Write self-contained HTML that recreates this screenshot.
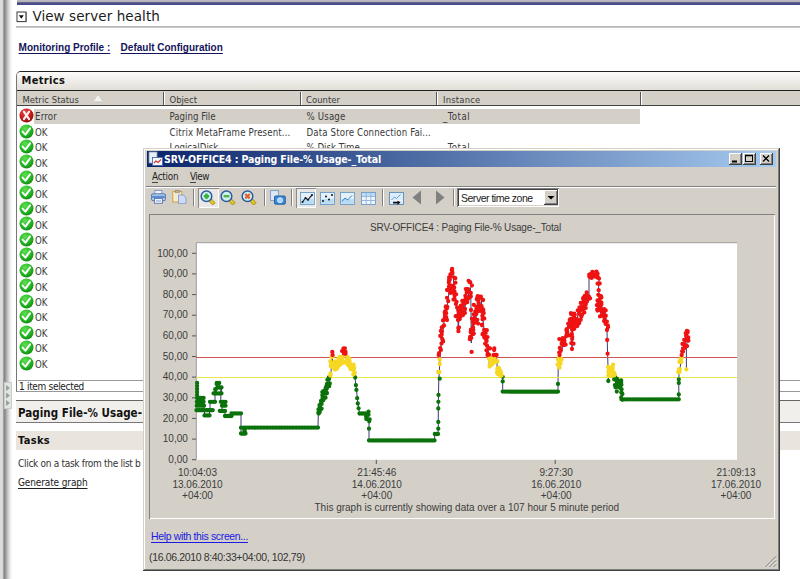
<!DOCTYPE html>
<html><head><meta charset="utf-8"><title>View server health</title>
<style>
*{box-sizing:border-box;margin:0;padding:0}
html,body{width:800px;height:579px;overflow:hidden;background:#fff}
body{position:relative;font-family:"DejaVu Sans Condensed","Liberation Sans",sans-serif;font-size:10px;color:#222}
.a{position:absolute}
.t{position:absolute;white-space:pre}
#lstrip{left:0;top:0;width:16px;height:579px;background:linear-gradient(90deg,#dedede 0,#d8d8d8 3px,#7e7e7e 3.8px,#909090 5px,#b8b8b8 7px,#dcdcdc 9px,#f6f6f6 11px,#fff 12.5px)}
#win{left:143px;top:148px;width:637px;height:423px;background:#d4d0c8;box-shadow:inset -1px -1px 0 #404040,inset 1px 1px 0 #d4d0c8,inset -2px -2px 0 #808080,inset 2px 2px 0 #fff}
.btn{position:absolute;top:5px;width:13px;height:12px;background:#d4d0c8;box-shadow:inset -1px -1px 0 #404040,inset 1px 1px 0 #fff,inset -2px -2px 0 #808080}
.sep{position:absolute;top:41px;width:2px;height:17px;border-left:1px solid #808080;border-right:1px solid #fff}
</style></head><body>
<div class="a" id="lstrip"></div>
<div class="a" style="left:16.5px;top:0;width:784px;height:5px;background:linear-gradient(#bcbcc0 0,#b0b0b6 2.2px,#4a4c88 2.6px,#4a4c88 4.6px,#fff 5px)"></div>
<div class="a" style="left:16px;top:26px;width:784px;height:2px;background:linear-gradient(#b0b0b0,#d0d0d0)"></div>
<svg class="a" style="left:16px;top:10.500px" width="12" height="12" viewBox="0 0 12 12"><rect x="1" y="1" width="9" height="9.500" fill="#fff" stroke="#3a3a3a" stroke-width="1"/><path d="M1 10.700h9.200V1" stroke="#555" stroke-width=".8" fill="none"/><path d="M2.800 4.200h5l-2.500 3.500z" fill="#111"/></svg>
<div class="t" style='left:32.40px;top:6.80px;font:13.5px "DejaVu Sans","Liberation Sans",sans-serif;line-height:19px;color:#1c1c1c;letter-spacing:0.078px;'>View server health</div>
<div class="t" style='left:18.60px;top:41.20px;font:bold 10px "Liberation Sans",sans-serif;line-height:14px;color:#14145a;text-decoration:underline;text-decoration-thickness:1px;text-underline-offset:1.5px;'>Monitoring Profile :</div>
<div class="t" style='left:120.60px;top:41.20px;font:bold 10px "Liberation Sans",sans-serif;line-height:14px;color:#14145a;text-decoration:underline;text-decoration-thickness:1px;text-underline-offset:1.5px;'>Default Configuration</div>
<div class="a" style="left:16px;top:71px;width:790px;height:321px;border:1px solid #777;border-top-color:#222;border-bottom-color:#999;border-radius:5px 0 0 0;background:#fff;overflow:hidden">
<div class="a" style="left:0;top:0;width:790px;height:18px;background:linear-gradient(#fcfbfa,#e2dfd8)"></div>
<div class="a" style="left:0;top:18px;width:790px;height:1px;background:#222"></div>
<div class="a" style="left:0;top:19px;width:790px;height:15px;background:#d4d0c8;border-bottom:1px solid #444"></div>
<div class="a" style="left:146px;top:20px;width:2px;height:13px;border-left:1px solid #555;border-right:1px solid #fff"></div>
<div class="a" style="left:283px;top:20px;width:2px;height:13px;border-left:1px solid #555;border-right:1px solid #fff"></div>
<div class="a" style="left:419px;top:20px;width:2px;height:13px;border-left:1px solid #555;border-right:1px solid #fff"></div>
<div class="a" style="left:623px;top:20px;width:2px;height:13px;border-left:1px solid #555;border-right:1px solid #fff"></div>
<div class="a" style="left:17px;top:36.500px;width:606px;height:15px;background:#d4d0c8"></div>
</div>
<div class="t" style='left:21.60px;top:73.40px;font:bold 11px "DejaVu Sans Condensed","Liberation Sans",sans-serif;line-height:15px;color:#111;letter-spacing:0.325px;'>Metrics</div>
<div class="t" style='left:22.40px;top:92.80px;font:9.4px "DejaVu Sans Condensed","Liberation Sans",sans-serif;line-height:13px;color:#3a3a3a;letter-spacing:0.063px;'>Metric Status</div>
<svg class="a" style="left:93px;top:95px" width="10" height="8" viewBox="0 0 10 8"><path d="M1.5 6.5l3.5-5.5 3.5 5.5z" fill="#f4f2ee" stroke="#fff" stroke-width=".8"/><path d="M1.5 6.8h7.2" stroke="#aaa" stroke-width=".6"/></svg>
<div class="t" style='left:169.50px;top:92.80px;font:9.4px "DejaVu Sans Condensed","Liberation Sans",sans-serif;line-height:13px;color:#3a3a3a;'>Object</div>
<div class="t" style='left:306.00px;top:92.80px;font:9.4px "DejaVu Sans Condensed","Liberation Sans",sans-serif;line-height:13px;color:#3a3a3a;letter-spacing:0.040px;'>Counter</div>
<div class="t" style='left:443.00px;top:92.80px;font:9.4px "DejaVu Sans Condensed","Liberation Sans",sans-serif;line-height:13px;color:#3a3a3a;letter-spacing:0.203px;'>Instance</div>
<svg class="a" width="0" height="0"><defs><radialGradient id="gg" cx=".4" cy=".3" r=".8"><stop offset="0" stop-color="#5ee04e"/><stop offset=".6" stop-color="#22b422"/><stop offset="1" stop-color="#0c7c10"/></radialGradient></defs></svg>
<svg class="a" style="left:18.5px;top:107.5px" width="15" height="15" viewBox="0 0 15 15"><defs><radialGradient id="gr" cx=".4" cy=".3" r=".8"><stop offset="0" stop-color="#e84848"/><stop offset=".55" stop-color="#c81818"/><stop offset="1" stop-color="#7c0a0a"/></radialGradient></defs><circle cx="7.5" cy="7.5" r="7" fill="url(#gr)"/><path d="M4.900 3.700l5.200 7.400M10.100 3.700l-5.200 7.400" stroke="#fdf0f0" stroke-width="2.200" stroke-linecap="round"/></svg>
<div class="t" style='left:35.00px;top:110.10px;font:9.6px "DejaVu Sans Condensed","Liberation Sans",sans-serif;line-height:13px;color:#3a3a3a;letter-spacing:0.180px;'>Error</div>
<div class="t" style='left:169.50px;top:110.10px;font:9.6px "DejaVu Sans Condensed","Liberation Sans",sans-serif;line-height:13px;color:#3a3a3a;'>Paging File</div>
<div class="t" style='left:306.50px;top:110.10px;font:9.6px "DejaVu Sans Condensed","Liberation Sans",sans-serif;line-height:13px;color:#3a3a3a;letter-spacing:0.165px;'>% Usage</div>
<div class="t" style='left:443.00px;top:110.10px;font:9.6px "DejaVu Sans Condensed","Liberation Sans",sans-serif;line-height:13px;color:#3a3a3a;letter-spacing:0.448px;'>_Total</div>
<svg class="a" style="left:18.5px;top:123.5px" width="15" height="15" viewBox="0 0 15 15"><circle cx="7.5" cy="7.5" r="7" fill="url(#gg)"/><path d="M3.6 7.6l2.8 3 4.6-6.2" stroke="#fff" stroke-width="2" fill="none" stroke-linecap="round" stroke-linejoin="round"/></svg>
<div class="t" style='left:35.00px;top:125.80px;font:9.6px "DejaVu Sans Condensed","Liberation Sans",sans-serif;line-height:13px;color:#3a3a3a;letter-spacing:0.023px;'>OK</div>
<div class="t" style='left:169.50px;top:125.80px;font:9.6px "DejaVu Sans Condensed","Liberation Sans",sans-serif;line-height:13px;color:#3a3a3a;letter-spacing:0.142px;'>Citrix MetaFrame Present...</div>
<div class="t" style='left:306.50px;top:125.80px;font:9.6px "DejaVu Sans Condensed","Liberation Sans",sans-serif;line-height:13px;color:#3a3a3a;letter-spacing:0.145px;'>Data Store Connection Fai...</div>
<svg class="a" style="left:18.5px;top:139.0px" width="15" height="15" viewBox="0 0 15 15"><circle cx="7.5" cy="7.5" r="7" fill="url(#gg)"/><path d="M3.6 7.6l2.8 3 4.6-6.2" stroke="#fff" stroke-width="2" fill="none" stroke-linecap="round" stroke-linejoin="round"/></svg>
<div class="t" style='left:35.00px;top:141.27px;font:9.6px "DejaVu Sans Condensed","Liberation Sans",sans-serif;line-height:13px;color:#3a3a3a;letter-spacing:0.023px;'>OK</div>
<div class="t" style='left:169.50px;top:141.27px;font:9.6px "DejaVu Sans Condensed","Liberation Sans",sans-serif;line-height:13px;color:#3a3a3a;'>LogicalDisk</div>
<div class="t" style='left:306.50px;top:141.27px;font:9.6px "DejaVu Sans Condensed","Liberation Sans",sans-serif;line-height:13px;color:#3a3a3a;'>% Disk Time</div>
<div class="t" style='left:443.00px;top:141.27px;font:9.6px "DejaVu Sans Condensed","Liberation Sans",sans-serif;line-height:13px;color:#3a3a3a;letter-spacing:0.448px;'>_Total</div>
<svg class="a" style="left:18.5px;top:154.4px" width="15" height="15" viewBox="0 0 15 15"><circle cx="7.5" cy="7.5" r="7" fill="url(#gg)"/><path d="M3.6 7.6l2.8 3 4.6-6.2" stroke="#fff" stroke-width="2" fill="none" stroke-linecap="round" stroke-linejoin="round"/></svg>
<div class="t" style='left:35.00px;top:156.74px;font:9.6px "DejaVu Sans Condensed","Liberation Sans",sans-serif;line-height:13px;color:#3a3a3a;letter-spacing:0.023px;'>OK</div>
<div class="t" style='left:169.50px;top:156.74px;font:9.6px "DejaVu Sans Condensed","Liberation Sans",sans-serif;line-height:13px;color:#3a3a3a;'>LogicalDisk</div>
<div class="t" style='left:306.50px;top:156.74px;font:9.6px "DejaVu Sans Condensed","Liberation Sans",sans-serif;line-height:13px;color:#3a3a3a;'>% Free Space</div>
<div class="t" style='left:443.00px;top:156.74px;font:9.6px "DejaVu Sans Condensed","Liberation Sans",sans-serif;line-height:13px;color:#3a3a3a;letter-spacing:0.448px;'>_Total</div>
<svg class="a" style="left:18.5px;top:169.9px" width="15" height="15" viewBox="0 0 15 15"><circle cx="7.5" cy="7.5" r="7" fill="url(#gg)"/><path d="M3.6 7.6l2.8 3 4.6-6.2" stroke="#fff" stroke-width="2" fill="none" stroke-linecap="round" stroke-linejoin="round"/></svg>
<div class="t" style='left:35.00px;top:172.21px;font:9.6px "DejaVu Sans Condensed","Liberation Sans",sans-serif;line-height:13px;color:#3a3a3a;letter-spacing:0.023px;'>OK</div>
<div class="t" style='left:169.50px;top:172.21px;font:9.6px "DejaVu Sans Condensed","Liberation Sans",sans-serif;line-height:13px;color:#3a3a3a;'>Memory</div>
<div class="t" style='left:306.50px;top:172.21px;font:9.6px "DejaVu Sans Condensed","Liberation Sans",sans-serif;line-height:13px;color:#3a3a3a;'>Available Bytes</div>
<svg class="a" style="left:18.5px;top:185.4px" width="15" height="15" viewBox="0 0 15 15"><circle cx="7.5" cy="7.5" r="7" fill="url(#gg)"/><path d="M3.6 7.6l2.8 3 4.6-6.2" stroke="#fff" stroke-width="2" fill="none" stroke-linecap="round" stroke-linejoin="round"/></svg>
<div class="t" style='left:35.00px;top:187.68px;font:9.6px "DejaVu Sans Condensed","Liberation Sans",sans-serif;line-height:13px;color:#3a3a3a;letter-spacing:0.023px;'>OK</div>
<div class="t" style='left:169.50px;top:187.68px;font:9.6px "DejaVu Sans Condensed","Liberation Sans",sans-serif;line-height:13px;color:#3a3a3a;'>Memory</div>
<div class="t" style='left:306.50px;top:187.68px;font:9.6px "DejaVu Sans Condensed","Liberation Sans",sans-serif;line-height:13px;color:#3a3a3a;'>Pages/sec</div>
<svg class="a" style="left:18.5px;top:200.9px" width="15" height="15" viewBox="0 0 15 15"><circle cx="7.5" cy="7.5" r="7" fill="url(#gg)"/><path d="M3.6 7.6l2.8 3 4.6-6.2" stroke="#fff" stroke-width="2" fill="none" stroke-linecap="round" stroke-linejoin="round"/></svg>
<div class="t" style='left:35.00px;top:203.15px;font:9.6px "DejaVu Sans Condensed","Liberation Sans",sans-serif;line-height:13px;color:#3a3a3a;letter-spacing:0.023px;'>OK</div>
<div class="t" style='left:169.50px;top:203.15px;font:9.6px "DejaVu Sans Condensed","Liberation Sans",sans-serif;line-height:13px;color:#3a3a3a;'>Network Interface</div>
<div class="t" style='left:306.50px;top:203.15px;font:9.6px "DejaVu Sans Condensed","Liberation Sans",sans-serif;line-height:13px;color:#3a3a3a;'>Bytes Total/sec</div>
<svg class="a" style="left:18.5px;top:216.3px" width="15" height="15" viewBox="0 0 15 15"><circle cx="7.5" cy="7.5" r="7" fill="url(#gg)"/><path d="M3.6 7.6l2.8 3 4.6-6.2" stroke="#fff" stroke-width="2" fill="none" stroke-linecap="round" stroke-linejoin="round"/></svg>
<div class="t" style='left:35.00px;top:218.62px;font:9.6px "DejaVu Sans Condensed","Liberation Sans",sans-serif;line-height:13px;color:#3a3a3a;letter-spacing:0.023px;'>OK</div>
<div class="t" style='left:169.50px;top:218.62px;font:9.6px "DejaVu Sans Condensed","Liberation Sans",sans-serif;line-height:13px;color:#3a3a3a;'>Processor</div>
<div class="t" style='left:306.50px;top:218.62px;font:9.6px "DejaVu Sans Condensed","Liberation Sans",sans-serif;line-height:13px;color:#3a3a3a;'>% Interrupt Time</div>
<div class="t" style='left:443.00px;top:218.62px;font:9.6px "DejaVu Sans Condensed","Liberation Sans",sans-serif;line-height:13px;color:#3a3a3a;letter-spacing:0.448px;'>_Total</div>
<svg class="a" style="left:18.5px;top:231.8px" width="15" height="15" viewBox="0 0 15 15"><circle cx="7.5" cy="7.5" r="7" fill="url(#gg)"/><path d="M3.6 7.6l2.8 3 4.6-6.2" stroke="#fff" stroke-width="2" fill="none" stroke-linecap="round" stroke-linejoin="round"/></svg>
<div class="t" style='left:35.00px;top:234.09px;font:9.6px "DejaVu Sans Condensed","Liberation Sans",sans-serif;line-height:13px;color:#3a3a3a;letter-spacing:0.023px;'>OK</div>
<div class="t" style='left:169.50px;top:234.09px;font:9.6px "DejaVu Sans Condensed","Liberation Sans",sans-serif;line-height:13px;color:#3a3a3a;'>Processor</div>
<div class="t" style='left:306.50px;top:234.09px;font:9.6px "DejaVu Sans Condensed","Liberation Sans",sans-serif;line-height:13px;color:#3a3a3a;'>% Processor Time</div>
<div class="t" style='left:443.00px;top:234.09px;font:9.6px "DejaVu Sans Condensed","Liberation Sans",sans-serif;line-height:13px;color:#3a3a3a;letter-spacing:0.448px;'>_Total</div>
<svg class="a" style="left:18.5px;top:247.3px" width="15" height="15" viewBox="0 0 15 15"><circle cx="7.5" cy="7.5" r="7" fill="url(#gg)"/><path d="M3.6 7.6l2.8 3 4.6-6.2" stroke="#fff" stroke-width="2" fill="none" stroke-linecap="round" stroke-linejoin="round"/></svg>
<div class="t" style='left:35.00px;top:249.56px;font:9.6px "DejaVu Sans Condensed","Liberation Sans",sans-serif;line-height:13px;color:#3a3a3a;letter-spacing:0.023px;'>OK</div>
<div class="t" style='left:169.50px;top:249.56px;font:9.6px "DejaVu Sans Condensed","Liberation Sans",sans-serif;line-height:13px;color:#3a3a3a;'>System</div>
<div class="t" style='left:306.50px;top:249.56px;font:9.6px "DejaVu Sans Condensed","Liberation Sans",sans-serif;line-height:13px;color:#3a3a3a;'>Context Switches/sec</div>
<svg class="a" style="left:18.5px;top:262.7px" width="15" height="15" viewBox="0 0 15 15"><circle cx="7.5" cy="7.5" r="7" fill="url(#gg)"/><path d="M3.6 7.6l2.8 3 4.6-6.2" stroke="#fff" stroke-width="2" fill="none" stroke-linecap="round" stroke-linejoin="round"/></svg>
<div class="t" style='left:35.00px;top:265.03px;font:9.6px "DejaVu Sans Condensed","Liberation Sans",sans-serif;line-height:13px;color:#3a3a3a;letter-spacing:0.023px;'>OK</div>
<div class="t" style='left:169.50px;top:265.03px;font:9.6px "DejaVu Sans Condensed","Liberation Sans",sans-serif;line-height:13px;color:#3a3a3a;'>Terminal Services</div>
<div class="t" style='left:306.50px;top:265.03px;font:9.6px "DejaVu Sans Condensed","Liberation Sans",sans-serif;line-height:13px;color:#3a3a3a;'>Active Sessions</div>
<svg class="a" style="left:18.5px;top:278.2px" width="15" height="15" viewBox="0 0 15 15"><circle cx="7.5" cy="7.5" r="7" fill="url(#gg)"/><path d="M3.6 7.6l2.8 3 4.6-6.2" stroke="#fff" stroke-width="2" fill="none" stroke-linecap="round" stroke-linejoin="round"/></svg>
<div class="t" style='left:35.00px;top:280.50px;font:9.6px "DejaVu Sans Condensed","Liberation Sans",sans-serif;line-height:13px;color:#3a3a3a;letter-spacing:0.023px;'>OK</div>
<div class="t" style='left:169.50px;top:280.50px;font:9.6px "DejaVu Sans Condensed","Liberation Sans",sans-serif;line-height:13px;color:#3a3a3a;letter-spacing:0.142px;'>Citrix MetaFrame Present...</div>
<div class="t" style='left:306.50px;top:280.50px;font:9.6px "DejaVu Sans Condensed","Liberation Sans",sans-serif;line-height:13px;color:#3a3a3a;'>Number of busy XML thre...</div>
<svg class="a" style="left:18.5px;top:293.7px" width="15" height="15" viewBox="0 0 15 15"><circle cx="7.5" cy="7.5" r="7" fill="url(#gg)"/><path d="M3.6 7.6l2.8 3 4.6-6.2" stroke="#fff" stroke-width="2" fill="none" stroke-linecap="round" stroke-linejoin="round"/></svg>
<div class="t" style='left:35.00px;top:295.97px;font:9.6px "DejaVu Sans Condensed","Liberation Sans",sans-serif;line-height:13px;color:#3a3a3a;letter-spacing:0.023px;'>OK</div>
<div class="t" style='left:169.50px;top:295.97px;font:9.6px "DejaVu Sans Condensed","Liberation Sans",sans-serif;line-height:13px;color:#3a3a3a;letter-spacing:0.142px;'>Citrix MetaFrame Present...</div>
<div class="t" style='left:306.50px;top:295.97px;font:9.6px "DejaVu Sans Condensed","Liberation Sans",sans-serif;line-height:13px;color:#3a3a3a;'>Resolution WorkItem Que...</div>
<svg class="a" style="left:18.5px;top:309.1px" width="15" height="15" viewBox="0 0 15 15"><circle cx="7.5" cy="7.5" r="7" fill="url(#gg)"/><path d="M3.6 7.6l2.8 3 4.6-6.2" stroke="#fff" stroke-width="2" fill="none" stroke-linecap="round" stroke-linejoin="round"/></svg>
<div class="t" style='left:35.00px;top:311.44px;font:9.6px "DejaVu Sans Condensed","Liberation Sans",sans-serif;line-height:13px;color:#3a3a3a;letter-spacing:0.023px;'>OK</div>
<div class="t" style='left:169.50px;top:311.44px;font:9.6px "DejaVu Sans Condensed","Liberation Sans",sans-serif;line-height:13px;color:#3a3a3a;'>Citrix IMA Networking</div>
<div class="t" style='left:306.50px;top:311.44px;font:9.6px "DejaVu Sans Condensed","Liberation Sans",sans-serif;line-height:13px;color:#3a3a3a;'>Network Connections</div>
<svg class="a" style="left:18.5px;top:324.6px" width="15" height="15" viewBox="0 0 15 15"><circle cx="7.5" cy="7.5" r="7" fill="url(#gg)"/><path d="M3.6 7.6l2.8 3 4.6-6.2" stroke="#fff" stroke-width="2" fill="none" stroke-linecap="round" stroke-linejoin="round"/></svg>
<div class="t" style='left:35.00px;top:326.91px;font:9.6px "DejaVu Sans Condensed","Liberation Sans",sans-serif;line-height:13px;color:#3a3a3a;letter-spacing:0.023px;'>OK</div>
<div class="t" style='left:169.50px;top:326.91px;font:9.6px "DejaVu Sans Condensed","Liberation Sans",sans-serif;line-height:13px;color:#3a3a3a;'>Citrix Licensing</div>
<div class="t" style='left:306.50px;top:326.91px;font:9.6px "DejaVu Sans Condensed","Liberation Sans",sans-serif;line-height:13px;color:#3a3a3a;'>License Server Connectio...</div>
<svg class="a" style="left:18.5px;top:340.1px" width="15" height="15" viewBox="0 0 15 15"><circle cx="7.5" cy="7.5" r="7" fill="url(#gg)"/><path d="M3.6 7.6l2.8 3 4.6-6.2" stroke="#fff" stroke-width="2" fill="none" stroke-linecap="round" stroke-linejoin="round"/></svg>
<div class="t" style='left:35.00px;top:342.38px;font:9.6px "DejaVu Sans Condensed","Liberation Sans",sans-serif;line-height:13px;color:#3a3a3a;letter-spacing:0.023px;'>OK</div>
<div class="t" style='left:169.50px;top:342.38px;font:9.6px "DejaVu Sans Condensed","Liberation Sans",sans-serif;line-height:13px;color:#3a3a3a;'>ICA Session</div>
<div class="t" style='left:306.50px;top:342.38px;font:9.6px "DejaVu Sans Condensed","Liberation Sans",sans-serif;line-height:13px;color:#3a3a3a;'>Latency - Session Average</div>
<svg class="a" style="left:18.5px;top:355.6px" width="15" height="15" viewBox="0 0 15 15"><circle cx="7.5" cy="7.5" r="7" fill="url(#gg)"/><path d="M3.6 7.6l2.8 3 4.6-6.2" stroke="#fff" stroke-width="2" fill="none" stroke-linecap="round" stroke-linejoin="round"/></svg>
<div class="t" style='left:35.00px;top:357.85px;font:9.6px "DejaVu Sans Condensed","Liberation Sans",sans-serif;line-height:13px;color:#3a3a3a;letter-spacing:0.023px;'>OK</div>
<div class="t" style='left:169.50px;top:357.85px;font:9.6px "DejaVu Sans Condensed","Liberation Sans",sans-serif;line-height:13px;color:#3a3a3a;'>Secure Ticket Authority</div>
<div class="t" style='left:306.50px;top:357.85px;font:9.6px "DejaVu Sans Condensed","Liberation Sans",sans-serif;line-height:13px;color:#3a3a3a;'>STA Bad Data Request Co...</div>
<div class="a" style="left:18px;top:380px;width:782px;height:1px;background:#999"></div>
<div class="t" style='left:19.00px;top:379.90px;font:10px "DejaVu Sans Condensed","Liberation Sans",sans-serif;line-height:14px;color:#222;letter-spacing:-0.317px;'>1 item selected</div>
<svg class="a" style="left:4px;top:382px" width="8" height="27" viewBox="0 0 8 27"><rect x=".5" y=".5" width="7" height="26" fill="#e2e6e2" stroke="#c8ccc8"/><path d="M2 3l4 3-4 3zM2 10.500l4 3-4 3zM2 18l4 3-4 3z" fill="#9aa09a"/></svg>
<div class="a" style="left:16px;top:400px;width:784px;height:23px;background:#f1efeb;border-top:1.5px solid #666;border-bottom:1.5px solid #777"></div>
<div class="t" style='left:18.00px;top:405.20px;font:bold 11.5px "DejaVu Sans Condensed","Liberation Sans",sans-serif;line-height:16px;color:#111;letter-spacing:0.036px;'>Paging File-% Usage-</div>
<div class="t" style='left:143.50px;top:405.20px;font:bold 11.5px "DejaVu Sans Condensed","Liberation Sans",sans-serif;line-height:16px;color:#111;'>_Total</div>
<div class="a" style="left:16px;top:431px;width:784px;height:19px;background:#e9e5de"></div>
<div class="t" style='left:18.00px;top:432.80px;font:bold 11px "DejaVu Sans Condensed","Liberation Sans",sans-serif;line-height:15px;color:#111;letter-spacing:0.325px;'>Tasks</div>
<div class="t" style='left:18.00px;top:456.80px;font:10px "DejaVu Sans Condensed","Liberation Sans",sans-serif;line-height:14px;color:#333;letter-spacing:-0.297px;'>Click on a task from the list b</div>
<div class="t" style='left:143.50px;top:456.80px;font:10px "DejaVu Sans Condensed","Liberation Sans",sans-serif;line-height:14px;color:#333;'>elow to view its details</div>
<div class="t" style='left:18.00px;top:475.60px;font:10px "DejaVu Sans Condensed","Liberation Sans",sans-serif;line-height:14px;color:#222;letter-spacing:-0.123px;text-decoration:underline;text-decoration-thickness:1px;text-underline-offset:1.5px;'>Generate graph</div>
<div class="a" id="win">
<div class="a" style="left:4px;top:3px;width:629px;height:16px;background:linear-gradient(90deg,#0a246a 0,#a6caf0 100%)"></div>
<svg class="a" style="left:5px;top:3px" width="16" height="16" viewBox="0 0 16 16"><rect x="1" y="1" width="8" height="11" fill="#e8eef8" stroke="#8a9ab8" stroke-width=".8"/><rect x="4.5" y="6.500" width="10" height="8" fill="#f4f8ff" stroke="#4a6aa8" stroke-width=".9"/><path d="M6 12l2-2 2 1.500 3-3" stroke="#d03030" stroke-width="1.100" fill="none"/></svg>
<div class="btn" style="left:586px"><svg width="13" height="12" viewBox="0 0 13 12" style="display:block"><path d="M3 8.500h5" stroke="#000" stroke-width="2"/></svg></div>
<div class="btn" style="left:600px"><svg width="13" height="12" viewBox="0 0 13 12" style="display:block"><rect x="2.500" y="2.500" width="7" height="6" fill="none" stroke="#000"/><path d="M2 2.500h8" stroke="#000" stroke-width="1.600"/></svg></div>
<div class="btn" style="left:617px"><svg width="13" height="12" viewBox="0 0 13 12" style="display:block"><path d="M3 2.500l6 6M9 2.500l-6 6" stroke="#000" stroke-width="1.300"/></svg></div>
<div class="a" style="left:3px;top:38px;width:630px;height:2px;border-top:1px solid #808080;border-bottom:1px solid #fff"></div>
<div class="sep" style="left:50px"></div>
<div class="sep" style="left:121px"></div>
<div class="sep" style="left:148px"></div>
<div class="sep" style="left:239px"></div>
<div class="sep" style="left:310px"></div>
<div class="a" style="left:55px;top:40px;width:21px;height:20px;background:#e9e8e6;box-shadow:inset 1px 1px 0 #8c8a86,inset -1px -1px 0 #fff"></div>
<div class="a" style="left:153px;top:40px;width:20px;height:20px;background:#e9e8e6;box-shadow:inset 1px 1px 0 #8c8a86,inset -1px -1px 0 #fff"></div>
<svg class="a" style="left:8px;top:42px" width="15" height="14" viewBox="0 0 15 14"><rect x="3.800" y=".5" width="7" height="4.500" fill="#f0f6ff" stroke="#7a94c4" stroke-width=".9"/><rect x=".6" y="3.800" width="13.800" height="6.800" rx="1.200" fill="#b4cce8" stroke="#4a6ca8" stroke-width=".9"/><rect x="1.200" y="5.800" width="12.600" height="2.200" fill="#5c8cd0"/><rect x="3.500" y="8.500" width="8" height="4.800" fill="#eef4fc" stroke="#5a7ab4" stroke-width=".9"/><path d="M5 11h5" stroke="#7a94c4" stroke-width=".9"/></svg>
<svg class="a" style="left:29px;top:42px" width="15" height="14" viewBox="0 0 15 14"><rect x=".8" y="1.500" width="9" height="10.500" fill="#f2ead2" stroke="#d0a430" stroke-width="1"/><rect x="3.500" y=".4" width="4" height="2.400" fill="#b8b098" stroke="#8a8470" stroke-width=".6"/><path d="M6.500 5h4.800l2.700 2.700v6h-7.500z" fill="#cfdcf6" stroke="#8098cc" stroke-width=".9"/></svg>
<svg class="a" style="left:57px;top:42px" width="16" height="15" viewBox="0 0 16 15"><path d="M10.300 10.200l2.500 2.500" stroke="#a89018" stroke-width="4" stroke-linecap="square"/><path d="M10.300 10.200l2.500 2.500" stroke="#e0c828" stroke-width="2.600" stroke-linecap="square"/><circle cx="6.500" cy="6.200" r="5.300" fill="#cdf0f0" stroke="#2c5c9c" stroke-width="1.500"/><path d="M3.800 6.200h5.400M6.500 3.500v5.400" stroke="#38b038" stroke-width="2.400"/></svg>
<svg class="a" style="left:77px;top:42px" width="16" height="15" viewBox="0 0 16 15"><path d="M10.300 10.200l2.500 2.500" stroke="#a89018" stroke-width="4" stroke-linecap="square"/><path d="M10.300 10.200l2.500 2.500" stroke="#e0c828" stroke-width="2.600" stroke-linecap="square"/><circle cx="6.500" cy="6.200" r="5.300" fill="#cdf0f0" stroke="#2c5c9c" stroke-width="1.500"/><path d="M3.600 6.200h5.800" stroke="#58b048" stroke-width="2.400"/></svg>
<svg class="a" style="left:98px;top:42px" width="16" height="15" viewBox="0 0 16 15"><path d="M10.300 10.200l2.500 2.500" stroke="#a89018" stroke-width="4" stroke-linecap="square"/><path d="M10.300 10.200l2.500 2.500" stroke="#e0c828" stroke-width="2.600" stroke-linecap="square"/><circle cx="6.500" cy="6.200" r="5.300" fill="#cdf0f0" stroke="#2c5c9c" stroke-width="1.500"/><path d="M4.300 4l4.400 4.400M8.700 4l-4.400 4.400" stroke="#e86030" stroke-width="2.200"/></svg>
<svg class="a" style="left:127px;top:42px" width="16" height="15" viewBox="0 0 16 15"><rect x=".6" y=".6" width="8" height="10" fill="#dce8f8" stroke="#7a98c8" stroke-width=".9"/><rect x="4.500" y="6" width="10.800" height="8.200" rx="1" fill="#3a8ad8" stroke="#1a5aa0" stroke-width=".9"/><circle cx="10" cy="10.200" r="2.500" fill="#a8d4f8" stroke="#e8f4ff" stroke-width=".8"/></svg>
<svg class="a" style="left:157px;top:44px" width="15" height="13" viewBox="0 0 15 13"><rect x=".5" y=".5" width="14" height="12" fill="#e4f0fa" stroke="#6c9cc8" stroke-width=".9"/><rect x="1.300" y="7" width="12.400" height="4.800" fill="#b8dcf4"/><path d="M2.500 10l3-4 2.500 1.800 4-4.800" stroke="#223" stroke-width="1.200" fill="none"/><circle cx="2.500" cy="10" r="1" fill="#111"/><circle cx="5.500" cy="6" r="1" fill="#111"/><circle cx="8" cy="7.800" r="1" fill="#111"/><circle cx="12" cy="3" r="1" fill="#111"/></svg>
<svg class="a" style="left:177px;top:44px" width="15" height="13" viewBox="0 0 15 13"><rect x=".5" y=".5" width="14" height="12" fill="#e4f0fa" stroke="#6c9cc8" stroke-width=".9"/><rect x="1.300" y="7" width="12.400" height="4.800" fill="#b8dcf4"/><circle cx="3" cy="9" r="1" fill="#111"/><circle cx="6" cy="4.500" r="1" fill="#111"/><circle cx="9" cy="7.500" r="1" fill="#111"/><circle cx="12" cy="3" r="1" fill="#111"/></svg>
<svg class="a" style="left:197px;top:44px" width="15" height="13" viewBox="0 0 15 13"><rect x=".5" y=".5" width="14" height="12" fill="#e4f0fa" stroke="#6c9cc8" stroke-width=".9"/><rect x="1.300" y="7" width="12.400" height="4.800" fill="#b8dcf4"/><path d="M2 9.500l3-3.500 2.500 2 4.500-4.500" stroke="#3a78b8" stroke-width="1" fill="none"/></svg>
<svg class="a" style="left:218px;top:44px" width="15" height="13" viewBox="0 0 15 13"><rect x=".5" y=".5" width="14" height="12" fill="#eef6fc" stroke="#6a9ac8" stroke-width=".9"/><rect x="1" y="1" width="13" height="3" fill="#bcdcf4"/><path d="M.5 4.500h14M.5 8.500h14M5.200 .5v12M9.800 .5v12" stroke="#8ab4dc" stroke-width=".9"/></svg>
<svg class="a" style="left:246px;top:44px" width="15" height="13" viewBox="0 0 15 13"><rect x=".5" y=".5" width="14" height="12" fill="#dcecf8" stroke="#5a8ab8" stroke-width=".9"/><path d="M2.500 8l3-3 2 1.500 4-4" stroke="#6a9ad0" stroke-width="1" fill="none"/><path d="M4 9.800h4.500v-1.600l3 2.400-3 2.400v-1.600h-4.500z" fill="#111"/><path d="M1.500 8.500h12" stroke="#fff" stroke-width="1" opacity=".6"/></svg>
<svg class="a" style="left:269px;top:42px" width="10" height="15" viewBox="0 0 10 15"><path d="M9 .5v14l-8.500-7z" fill="#808080"/></svg>
<svg class="a" style="left:292px;top:42px" width="10" height="15" viewBox="0 0 10 15"><path d="M1 .5v14l8.500-7z" fill="#808080"/></svg>
<div class="a" style="left:314px;top:40px;width:102px;height:19px;background:#fff;box-shadow:inset 1px 1px 0 #808080,inset -1px -1px 0 #fff,inset 2px 2px 0 #404040,inset -2px -2px 0 #d4d0c8"></div>
<div class="a" style="left:401px;top:42px;width:14px;height:15px;background:#d4d0c8;box-shadow:inset -1px -1px 0 #404040,inset 1px 1px 0 #fff,inset -2px -2px 0 #808080"><svg width="14" height="15" viewBox="0 0 14 15" style="display:block"><path d="M3.500 6h7l-3.500 3.500z" fill="#000"/></svg></div>
<div class="a" style="left:6px;top:66px;width:626px;height:305px;background:#d4d0c8;box-shadow:inset 1px 1px 0 #808080,inset -1px -1px 0 #fff"></div>
</div>
<div class="t" style='left:164.00px;top:151.70px;font:bold 10.5px "DejaVu Sans Condensed","Liberation Sans",sans-serif;line-height:15px;color:#fff;letter-spacing:-0.131px;'>SRV-OFFICE4 : Paging File-% Usage-_Total</div>
<div class="t" style='left:152.00px;top:170.40px;font:9.8px "DejaVu Sans Condensed","Liberation Sans",sans-serif;line-height:14px;color:#222;letter-spacing:-0.199px;'>Action</div>
<div class="a" style="left:152px;top:181.500px;width:6px;height:1px;background:#444"></div>
<div class="t" style='left:190.00px;top:170.40px;font:9.8px "DejaVu Sans Condensed","Liberation Sans",sans-serif;line-height:14px;color:#222;letter-spacing:-0.477px;'>View</div>
<div class="a" style="left:190px;top:181.500px;width:6px;height:1px;background:#444"></div>
<div class="t" style='left:461.00px;top:190.50px;font:10.5px "Liberation Sans",sans-serif;line-height:15px;color:#222;letter-spacing:-0.486px;'>Server time zone</div>
<div class="t" style='left:151.00px;top:528.90px;font:10.5px "Liberation Sans",sans-serif;line-height:15px;color:#1a1ae0;letter-spacing:-0.360px;text-decoration:underline;text-decoration-thickness:1px;text-underline-offset:1.5px;'>Help with this screen...</div>
<div class="t" style='left:149.00px;top:550.00px;font:10.5px "Liberation Sans",sans-serif;line-height:15px;color:#333;letter-spacing:-0.349px;'>(16.06.2010 8:40:33+04:00, 102,79)</div>
<svg class="a" style="left:764px;top:555px" width="13" height="13" viewBox="0 0 13 13"><path d="M12 1.500L1.500 12M12 5.500L5.500 12M12 9.500L9.500 12" stroke="#6c6c6c" stroke-width="1"/><path d="M12 2.700L2.700 12M12 6.700L6.700 12M12 10.700L10.700 12" stroke="#ece9e4" stroke-width=".8"/></svg>
<svg class="a" style="left:0;top:0" width="800" height="579" viewBox="0 0 800 579">
<rect x="196.3" y="242.5" width="540.7" height="217.3" fill="#fff"/>
<path d="M196.3 459.8V242.7H737" stroke="#9a9a9a" stroke-width="1" fill="none"/>
<path d="M192 459.7H196" stroke="#555" stroke-width="1"/>
<path d="M192 439.1H196" stroke="#555" stroke-width="1"/>
<path d="M192 418.4H196" stroke="#555" stroke-width="1"/>
<path d="M192 397.8H196" stroke="#555" stroke-width="1"/>
<path d="M192 377.1H196" stroke="#555" stroke-width="1"/>
<path d="M192 356.5H196" stroke="#555" stroke-width="1"/>
<path d="M192 335.9H196" stroke="#555" stroke-width="1"/>
<path d="M192 315.2H196" stroke="#555" stroke-width="1"/>
<path d="M192 294.6H196" stroke="#555" stroke-width="1"/>
<path d="M192 273.9H196" stroke="#555" stroke-width="1"/>
<path d="M192 253.3H196" stroke="#555" stroke-width="1"/>
<path d="M376.3 459.8V464" stroke="#555" stroke-width="1"/>
<path d="M555.2 459.8V464" stroke="#555" stroke-width="1"/>
<path d="M197.1 383.0 L197.1 386.0 L197.1 389.0 L197.1 392.0 L197.1 395.0 L197.1 398.0 L203.6 398.0 L203.6 401.8 L196.8 401.8 L196.8 405.7 L204.0 405.7 L204.0 410.2 L196.5 410.2 L212.7 410.2 L209.5 410.2 L209.5 415.4 L204.5 415.4 L204.5 410.2 L210.0 410.2 L210.0 401.8 L215.0 401.8 L215.0 393.3 L213.5 393.3 L221.5 393.3 L221.5 387.5 L216.0 387.5 L216.8 383.0 L219.2 383.0 L219.2 387.5 L220.8 387.5 L220.8 393.3 L220.8 401.8 L225.5 401.8 L225.5 405.7 L222.0 405.7 L222.0 410.9 L219.8 410.9 L225.0 410.9 L225.0 416.0 L231.5 416.0 L231.5 413.4 L241.0 413.4 L241.0 427.7 L241.0 433.5 L245.5 433.5 L243.5 427.6 L318.0 427.6 L318.3 413.0 L319.0 413.0 L320.0 404.0 L321.0 408.0 L322.0 398.0 L324.0 392.0 L325.0 395.0 L327.0 386.0 L329.0 382.0 L330.0 377.0 L331.0 372.0 L331.5 364.0 L332.3 352.0 L332.6 364.0 L334.0 369.0 L335.0 362.0 L337.0 366.0 L338.5 360.0 L340.0 362.0 L342.0 358.5 L342.6 352.5 L343.5 349.0 L344.5 352.5 L345.6 350.0 L346.3 358.5 L348.0 361.0 L350.0 365.0 L352.0 368.0 L354.0 371.0 L354.9 377.5 L355.8 384.0 L356.6 391.0 L357.2 397.0 L358.0 404.0 L358.8 408.5 L359.5 413.5 L367.0 413.5 L367.0 418.6 L369.0 420.0 L369.0 428.7 L369.0 440.4 L434.5 440.4 L434.8 434.0 L438.0 434.0 L438.3 428.7 L438.3 422.0 L438.3 408.5 L438.4 401.8 L438.5 395.0 L438.8 378.0 L439.4 372.0 L439.7 364.0 L440.0 358.0 L440.5 353.4 L441.0 345.0 L441.5 338.0 L443.0 330.0 L444.0 322.0 L445.7 314.6 L447.0 307.0 L448.3 299.0 L449.0 291.0 L449.6 283.5 L451.0 276.0 L452.2 270.2 L453.0 273.0 L453.5 281.0 L454.0 288.7 L455.0 294.0 L456.0 303.0 L457.4 312.0 L458.0 320.0 L458.2 330.0 L459.0 318.0 L460.0 317.0 L461.0 308.0 L462.5 312.0 L464.0 301.6 L465.0 307.0 L466.0 296.0 L467.7 300.0 L469.0 292.0 L470.3 287.4 L470.8 296.5 L471.0 310.0 L471.2 338.0 L471.3 343.0 L472.0 325.0 L473.0 327.5 L474.5 315.0 L476.0 318.0 L477.0 307.0 L478.0 300.0 L479.5 303.0 L480.7 307.0 L481.5 300.0 L482.0 314.0 L483.3 322.0 L484.0 330.0 L485.0 328.0 L486.0 340.5 L487.0 345.0 L488.0 350.0 L489.0 354.7 L489.0 358.6 L489.3 367.7 L490.5 360.0 L491.5 358.0 L494.0 357.0 L496.0 354.7 L496.5 358.0 L497.0 361.0 L497.2 369.0 L497.5 374.0 L500.0 374.5 L502.7 376.8 L502.7 381.4 L502.7 391.6 L558.0 391.6 L558.0 384.0 L558.2 366.5 L559.5 362.0 L561.0 359.0 L560.0 354.8 L561.0 347.0 L562.0 350.0 L563.0 340.0 L564.0 343.0 L565.4 338.0 L566.5 330.0 L567.5 334.0 L568.5 322.0 L570.0 326.0 L571.0 318.0 L571.9 334.0 L572.0 349.0 L572.3 340.0 L572.8 316.6 L574.0 325.0 L575.5 318.0 L577.0 321.0 L578.5 311.0 L580.0 316.0 L581.0 306.0 L582.5 309.0 L583.5 299.0 L584.5 302.0 L586.0 296.0 L587.5 300.0 L589.0 297.0 L589.0 274.0 L590.5 279.0 L592.0 274.0 L594.0 277.0 L596.0 273.6 L598.0 276.0 L599.0 280.0 L598.5 290.0 L600.0 299.0 L598.0 306.3 L600.0 312.0 L602.0 308.0 L604.0 318.0 L605.0 312.0 L606.5 322.5 L607.0 330.0 L607.2 340.0 L607.6 353.7 L608.0 367.0 L608.3 381.0 L608.6 374.0 L610.0 370.0 L611.0 376.0 L612.5 368.0 L614.0 375.3 L615.0 378.4 L616.5 386.0 L618.0 380.0 L619.0 389.0 L620.5 384.0 L621.8 391.7 L621.0 396.0 L621.5 399.3 L678.8 399.3 L678.8 394.5 L678.8 383.0 L678.8 379.3 L679.0 374.6 L680.0 368.0 L681.0 362.0 L681.7 358.0 L682.0 353.7 L683.6 346.0 L684.5 340.0 L685.5 336.0 L686.4 330.0 L687.0 333.0 L688.0 338.0 L687.0 343.0 L686.4 346.0 L686.4 369.3" stroke="#3a3a78" stroke-width="1" fill="none"/>
<path d="M196 357.5H737" stroke="#cf5555" stroke-width="1"/>
<path d="M196 377.5H737" stroke="#e9e44a" stroke-width="1"/>
<path d="M197.1 383.0h0M197.1 386.0h0M197.1 389.0h0M197.1 392.0h0M197.1 395.0h0M197.1 398.0h0M198.7 398.0h0M200.3 398.0h0M202.0 398.0h0M203.6 398.0h0M203.6 401.8h0M201.9 401.8h0M200.2 401.8h0M198.5 401.8h0M196.8 401.8h0M196.8 405.7h0M198.6 405.7h0M200.4 405.7h0M202.2 405.7h0M204.0 405.7h0M204.0 410.2h0M202.5 410.2h0M201.0 410.2h0M199.5 410.2h0M198.0 410.2h0M196.5 410.2h0M198.1 410.2h0M199.7 410.2h0M201.4 410.2h0M203.0 410.2h0M204.6 410.2h0M206.2 410.2h0M207.8 410.2h0M209.5 410.2h0M211.1 410.2h0M212.7 410.2h0M211.1 410.2h0M209.5 410.2h0M209.5 415.4h0M207.8 415.4h0M206.2 415.4h0M204.5 415.4h0M204.5 410.2h0M206.3 410.2h0M208.2 410.2h0M210.0 410.2h0M210.0 401.8h0M211.7 401.8h0M213.3 401.8h0M215.0 401.8h0M215.0 393.3h0M213.5 393.3h0M215.1 393.3h0M216.7 393.3h0M218.3 393.3h0M219.9 393.3h0M221.5 393.3h0M221.5 387.5h0M219.7 387.5h0M217.8 387.5h0M215.5 389.8h0M215.2 389.2h0M216.6 383.9h0M216.8 383.0h0M219.2 383.0h0M219.2 387.5h0M220.8 387.5h0M220.8 393.3h0M220.8 401.8h0M222.4 401.8h0M223.9 401.8h0M225.5 401.8h0M225.5 405.7h0M223.8 405.7h0M222.0 405.7h0M222.0 410.9h0M219.8 410.9h0M221.5 410.9h0M223.3 410.9h0M225.0 410.9h0M225.0 416.0h0M226.6 416.0h0M228.2 416.0h0M229.9 416.0h0M231.5 416.0h0M231.5 413.4h0M233.1 413.4h0M234.7 413.4h0M236.2 413.4h0M237.8 413.4h0M239.4 413.4h0M241.0 413.4h0M241.0 427.7h0M241.0 433.5h0M242.5 433.5h0M244.0 433.5h0M245.5 433.5h0M244.8 431.5h0M244.2 429.6h0M243.5 427.6h0M245.0 427.6h0M246.5 427.6h0M248.1 427.6h0M249.6 427.6h0M251.1 427.6h0M252.6 427.6h0M254.1 427.6h0M255.7 427.6h0M257.2 427.6h0M258.7 427.6h0M260.2 427.6h0M261.7 427.6h0M263.3 427.6h0M264.8 427.6h0M266.3 427.6h0M267.8 427.6h0M269.3 427.6h0M270.9 427.6h0M272.4 427.6h0M273.9 427.6h0M275.4 427.6h0M276.9 427.6h0M278.5 427.6h0M280.0 427.6h0M281.5 427.6h0M283.0 427.6h0M284.6 427.6h0M286.1 427.6h0M287.6 427.6h0M289.1 427.6h0M290.6 427.6h0M292.2 427.6h0M293.7 427.6h0M295.2 427.6h0M296.7 427.6h0M298.2 427.6h0M299.8 427.6h0M301.3 427.6h0M302.8 427.6h0M304.3 427.6h0M305.8 427.6h0M307.4 427.6h0M308.9 427.6h0M310.4 427.6h0M311.9 427.6h0M313.4 427.6h0M315.0 427.6h0M316.5 427.6h0M318.0 427.6h0M318.3 413.0h0M318.8 413.6h0M318.5 409.5h0M319.8 411.9h0M319.5 405.1h0M321.2 409.1h0M319.7 406.5h0M319.6 407.7h0M321.6 408.6h0M320.2 404.6h0M320.9 403.6h0M321.6 403.9h0M321.0 400.9h0M322.5 395.9h0M322.5 398.3h0M322.4 395.0h0M323.3 400.3h0M322.3 392.1h0M324.2 392.8h0M324.1 391.7h0M322.8 400.1h0M323.8 392.1h0M324.2 391.2h0M323.3 391.2h0M324.9 390.3h0M326.0 393.4h0M325.5 397.7h0M325.7 387.8h0M326.9 393.0h0M325.9 390.0h0M326.8 388.6h0M326.9 393.3h0M326.2 386.9h0M326.7 385.7h0M327.2 385.0h0M326.6 385.7h0M328.4 385.1h0M327.0 384.0h0M329.2 386.2h0M327.4 379.8h0M329.7 383.6h0M329.8 383.4h0M329.0 379.1h0M329.1 384.6h0M328.8 377.5h0M329.2 377.5h0M355.2 377.5h0M355.9 385.2h0M356.4 389.9h0M357.2 398.2h0M357.8 403.5h0M358.6 408.3h0M359.5 413.5h0M361.0 413.5h0M362.5 413.5h0M364.0 413.5h0M365.5 413.5h0M367.0 413.5h0M366.3 419.0h0M366.1 416.5h0M368.5 414.8h0M366.9 418.3h0M367.1 415.4h0M369.2 421.3h0M369.7 419.3h0M368.5 411.7h0M369.0 420.0h0M369.0 428.7h0M369.0 440.4h0M370.5 440.4h0M372.0 440.4h0M373.6 440.4h0M375.1 440.4h0M376.6 440.4h0M378.1 440.4h0M379.7 440.4h0M381.2 440.4h0M382.7 440.4h0M384.2 440.4h0M385.8 440.4h0M387.3 440.4h0M388.8 440.4h0M390.3 440.4h0M391.8 440.4h0M393.4 440.4h0M394.9 440.4h0M396.4 440.4h0M397.9 440.4h0M399.5 440.4h0M401.0 440.4h0M402.5 440.4h0M404.0 440.4h0M405.6 440.4h0M407.1 440.4h0M408.6 440.4h0M410.1 440.4h0M411.7 440.4h0M413.2 440.4h0M414.7 440.4h0M416.2 440.4h0M417.7 440.4h0M419.3 440.4h0M420.8 440.4h0M422.3 440.4h0M423.8 440.4h0M425.4 440.4h0M426.9 440.4h0M428.4 440.4h0M429.9 440.4h0M431.5 440.4h0M433.0 440.4h0M434.5 440.4h0M434.8 434.0h0M436.4 434.0h0M438.0 434.0h0M438.3 428.7h0M438.3 422.0h0M438.3 408.5h0M438.4 401.8h0M438.5 395.0h0M439.7 378.7h0M502.7 376.8h0M502.7 381.4h0M502.7 391.6h0M504.2 391.6h0M505.8 391.6h0M507.3 391.6h0M508.8 391.6h0M510.4 391.6h0M511.9 391.6h0M513.5 391.6h0M515.0 391.6h0M516.5 391.6h0M518.1 391.6h0M519.6 391.6h0M521.1 391.6h0M522.7 391.6h0M524.2 391.6h0M525.7 391.6h0M527.3 391.6h0M528.8 391.6h0M530.4 391.6h0M531.9 391.6h0M533.4 391.6h0M535.0 391.6h0M536.5 391.6h0M538.0 391.6h0M539.6 391.6h0M541.1 391.6h0M542.6 391.6h0M544.2 391.6h0M545.7 391.6h0M547.2 391.6h0M548.8 391.6h0M550.3 391.6h0M551.9 391.6h0M553.4 391.6h0M554.9 391.6h0M556.5 391.6h0M558.0 391.6h0M558.0 384.0h0M608.3 381.0h0M615.5 377.5h0M614.2 379.4h0M615.5 379.3h0M614.4 378.4h0M614.8 379.4h0M614.9 385.1h0M615.6 386.2h0M616.8 391.5h0M615.5 387.2h0M616.4 384.7h0M618.3 385.2h0M617.1 378.8h0M616.7 381.2h0M617.0 380.0h0M617.7 382.7h0M619.0 382.8h0M619.0 380.7h0M618.7 386.7h0M618.1 386.8h0M619.9 386.5h0M620.6 384.1h0M620.4 388.0h0M619.8 386.2h0M621.2 389.1h0M621.2 382.4h0M621.2 380.5h0M621.4 384.8h0M621.6 389.3h0M620.5 386.0h0M622.4 394.0h0M621.9 393.1h0M621.2 397.4h0M621.3 392.6h0M622.4 399.8h0M621.5 399.3h0M623.0 399.3h0M624.5 399.3h0M626.0 399.3h0M627.5 399.3h0M629.0 399.3h0M630.5 399.3h0M632.1 399.3h0M633.6 399.3h0M635.1 399.3h0M636.6 399.3h0M638.1 399.3h0M639.6 399.3h0M641.1 399.3h0M642.6 399.3h0M644.1 399.3h0M645.6 399.3h0M647.1 399.3h0M648.6 399.3h0M650.1 399.3h0M651.7 399.3h0M653.2 399.3h0M654.7 399.3h0M656.2 399.3h0M657.7 399.3h0M659.2 399.3h0M660.7 399.3h0M662.2 399.3h0M663.7 399.3h0M665.2 399.3h0M666.7 399.3h0M668.2 399.3h0M669.8 399.3h0M671.3 399.3h0M672.8 399.3h0M674.3 399.3h0M675.8 399.3h0M677.3 399.3h0M678.8 399.3h0M678.8 394.5h0M678.8 383.0h0M678.8 379.3h0" stroke="#0b720b" stroke-width="4.300" stroke-linecap="round" fill="none"/>
<path d="M330.2 375.5h0M330.7 374.5h0M330.5 373.5h0M330.7 365.9h0M331.7 366.6h0M331.4 363.7h0M330.3 361.3h0M332.7 362.6h0M332.6 357.0h0M331.7 357.0h0M331.5 365.7h0M332.0 365.8h0M332.7 366.1h0M332.5 367.0h0M332.7 367.6h0M335.0 369.5h0M334.5 368.5h0M334.1 367.2h0M334.4 367.5h0M336.3 365.7h0M335.2 361.4h0M334.5 363.1h0M335.3 363.0h0M335.1 369.1h0M335.0 367.7h0M335.6 364.0h0M336.9 368.8h0M338.2 366.6h0M338.2 364.3h0M337.2 362.0h0M336.9 363.5h0M338.7 358.7h0M337.8 361.8h0M339.8 364.9h0M339.7 362.1h0M339.6 357.0h0M338.5 358.5h0M338.3 361.1h0M338.5 361.3h0M340.5 364.1h0M341.4 357.0h0M341.8 363.2h0M341.9 359.4h0M340.3 361.7h0M340.5 360.9h0M342.5 363.0h0M342.6 357.0h0M342.0 358.5h0M345.3 361.9h0M347.4 363.7h0M345.9 362.8h0M347.6 357.0h0M347.0 358.8h0M346.5 360.2h0M349.2 359.1h0M349.4 358.8h0M348.3 365.5h0M348.0 358.9h0M348.4 362.5h0M349.5 365.4h0M348.9 362.8h0M350.8 365.2h0M349.6 361.5h0M351.3 366.3h0M350.3 368.5h0M350.8 364.6h0M351.1 369.4h0M350.4 367.2h0M350.2 367.8h0M351.7 366.0h0M352.6 365.8h0M352.3 367.5h0M352.6 369.0h0M352.9 367.9h0M352.3 368.7h0M353.3 374.5h0M353.7 370.6h0M353.6 364.7h0M354.3 367.8h0M354.8 373.1h0M354.5 372.3h0M438.2 372.0h0M439.4 372.0h0M439.7 364.0h0M439.6 359.4h0M489.0 358.6h0M490.5 365.4h0M489.6 366.5h0M489.7 365.6h0M490.6 363.4h0M490.2 359.5h0M490.0 361.0h0M489.8 358.8h0M490.1 357.0h0M492.5 361.6h0M492.4 364.2h0M491.6 357.7h0M491.4 361.8h0M491.3 357.0h0M493.2 357.0h0M492.6 359.2h0M492.4 359.5h0M493.1 357.2h0M494.9 362.1h0M493.2 361.9h0M493.9 358.9h0M494.3 357.0h0M493.6 357.0h0M495.0 362.0h0M495.9 360.3h0M497.4 361.5h0M497.0 361.0h0M497.2 369.0h0M496.9 372.5h0M498.9 372.5h0M498.6 372.7h0M497.8 374.1h0M499.2 374.4h0M499.8 369.9h0M497.8 369.5h0M498.6 367.7h0M500.7 375.5h0M499.5 374.4h0M500.0 375.5h0M501.4 375.5h0M501.2 375.5h0M501.6 375.5h0M500.6 371.8h0M500.9 372.6h0M500.5 375.5h0M501.1 375.5h0M501.0 374.3h0M501.2 374.3h0M559.4 365.7h0M559.5 367.7h0M557.6 364.5h0M557.9 359.6h0M559.1 362.9h0M558.8 358.7h0M560.2 363.4h0M560.6 363.3h0M559.3 357.2h0M561.4 359.1h0M560.4 362.9h0M561.6 359.6h0M560.1 359.9h0M559.6 359.5h0M608.0 367.0h0M609.5 374.1h0M608.3 375.3h0M608.4 371.6h0M610.0 370.3h0M610.1 370.8h0M608.9 371.0h0M611.0 367.4h0M610.8 371.3h0M610.5 375.5h0M612.0 375.5h0M610.0 375.5h0M610.7 372.9h0M611.8 375.5h0M611.7 372.1h0M612.1 368.0h0M612.6 368.1h0M613.1 364.7h0M612.6 369.7h0M614.1 373.0h0M613.9 372.8h0M613.6 372.4h0M614.7 374.1h0M614.2 375.4h0M678.2 372.0h0M679.0 369.1h0M679.5 372.0h0M679.9 369.5h0M679.1 369.3h0M680.3 360.2h0M679.5 362.0h0M681.3 362.0h0M681.0 358.7h0M681.4 357.0h0M681.7 358.0h0M686.4 369.3h0" stroke="#f6d822" stroke-width="4.300" stroke-linecap="round" fill="none"/>
<path d="M332.6 355.0h0M332.3 352.0h0M342.1 351.1h0M343.4 348.6h0M343.8 348.3h0M344.3 350.9h0M344.3 353.5h0M344.9 348.3h0M345.5 351.8h0M345.6 353.6h0M439.1 353.1h0M438.7 355.0h0M440.9 349.9h0M440.2 348.1h0M441.5 343.6h0M443.1 341.4h0M442.6 339.8h0M440.9 336.3h0M440.3 335.9h0M440.9 330.9h0M442.2 338.8h0M441.8 327.5h0M441.7 334.4h0M444.0 325.5h0M442.0 331.6h0M443.5 326.1h0M442.4 327.1h0M445.4 318.7h0M443.0 320.4h0M446.2 317.2h0M445.0 314.4h0M447.0 320.0h0M444.8 317.9h0M445.0 316.6h0M444.7 312.2h0M445.4 311.1h0M446.0 306.3h0M446.2 313.2h0M447.3 307.0h0M445.7 307.0h0M446.8 308.5h0M448.2 301.2h0M447.1 290.0h0M447.0 297.8h0M450.0 289.5h0M450.3 292.9h0M448.8 282.5h0M451.2 285.7h0M449.0 286.5h0M450.4 276.7h0M449.8 279.7h0M449.0 280.1h0M449.1 277.3h0M450.4 274.5h0M450.6 276.2h0M452.1 268.8h0M451.8 270.3h0M452.5 273.2h0M452.2 271.3h0M454.3 277.6h0M455.3 278.2h0M455.4 282.7h0M453.1 286.0h0M453.6 288.8h0M454.2 287.4h0M454.5 291.3h0M452.9 292.5h0M454.6 295.7h0M453.5 299.6h0M454.5 299.0h0M456.1 294.3h0M456.6 301.8h0M457.1 307.6h0M455.9 303.9h0M458.7 312.1h0M457.7 315.3h0M455.7 316.2h0M458.1 307.6h0M458.7 318.2h0M458.0 320.0h0M458.3 328.0h0M458.4 331.2h0M459.8 319.1h0M459.0 327.4h0M459.6 316.7h0M458.0 320.1h0M458.7 318.2h0M458.0 320.1h0M460.2 313.0h0M460.5 315.1h0M458.4 310.6h0M461.6 312.4h0M460.9 305.6h0M461.6 313.9h0M460.3 311.2h0M459.9 308.7h0M460.6 316.3h0M462.9 315.2h0M461.8 310.6h0M462.4 309.3h0M463.2 304.2h0M463.5 310.5h0M462.3 307.8h0M464.4 303.4h0M461.9 308.1h0M462.3 300.9h0M465.0 308.8h0M465.2 303.1h0M464.6 310.2h0M464.9 313.1h0M464.1 309.9h0M467.3 302.2h0M465.6 298.5h0M467.2 300.2h0M465.4 295.8h0M465.5 299.9h0M467.2 297.1h0M465.8 289.1h0M466.0 297.9h0M468.9 291.8h0M468.7 298.0h0M467.2 300.4h0M466.7 292.5h0M466.9 289.3h0M468.3 292.2h0M467.9 289.2h0M470.8 293.0h0M467.9 289.3h0M468.6 280.8h0M471.9 285.5h0M469.7 282.2h0M470.2 282.2h0M470.8 296.5h0M471.0 310.0h0M471.2 338.0h0M471.6 351.9h0M470.9 337.6h0M469.8 339.2h0M470.1 336.9h0M473.3 329.9h0M470.9 329.7h0M470.7 332.2h0M471.5 332.8h0M473.4 323.4h0M473.0 334.2h0M472.9 322.1h0M473.8 333.6h0M473.1 327.4h0M474.5 321.4h0M472.0 318.7h0M475.6 322.3h0M473.7 320.3h0M473.7 314.3h0M473.8 304.8h0M475.6 314.4h0M474.9 321.2h0M474.2 318.4h0M477.3 319.8h0M476.0 319.6h0M478.1 323.6h0M476.3 314.1h0M475.2 311.7h0M476.4 309.4h0M476.3 306.8h0M477.8 308.4h0M477.4 297.5h0M477.7 296.2h0M477.6 299.9h0M476.8 299.2h0M477.3 311.6h0M479.0 296.6h0M478.2 296.8h0M478.6 303.0h0M479.6 308.0h0M481.8 309.6h0M478.6 299.5h0M478.9 304.9h0M480.9 296.6h0M481.6 306.2h0M483.1 300.0h0M482.8 309.2h0M480.8 297.3h0M480.3 311.1h0M482.6 315.1h0M483.7 313.0h0M483.3 310.0h0M482.4 316.1h0M483.8 318.4h0M482.0 325.3h0M482.6 319.3h0M482.1 324.6h0M484.5 332.9h0M482.5 334.3h0M484.6 331.5h0M484.1 329.9h0M482.9 333.7h0M484.3 318.4h0M485.7 332.9h0M486.8 330.2h0M484.6 335.9h0M487.5 337.1h0M484.2 337.3h0M486.2 339.8h0M485.6 339.1h0M487.4 346.4h0M485.2 343.7h0M486.6 341.0h0M486.4 350.3h0M488.9 348.4h0M486.9 345.4h0M490.0 348.4h0M487.5 355.0h0M487.7 353.7h0M489.0 354.7h0M496.6 355.0h0M494.1 350.1h0M493.7 355.0h0M495.4 355.0h0M494.3 348.5h0M559.6 352.4h0M559.6 355.0h0M559.2 352.6h0M561.7 344.0h0M559.3 339.1h0M560.9 350.2h0M562.8 340.9h0M559.8 348.0h0M560.6 351.1h0M563.8 342.2h0M561.8 343.0h0M563.9 342.1h0M563.8 343.5h0M564.7 344.1h0M563.7 344.0h0M562.4 340.0h0M562.6 343.8h0M563.1 338.4h0M563.2 338.7h0M562.7 338.2h0M563.7 345.2h0M564.4 341.0h0M565.6 344.7h0M564.0 339.2h0M566.1 336.3h0M566.7 334.0h0M567.2 331.3h0M566.4 330.3h0M568.7 335.3h0M566.5 329.6h0M567.2 332.5h0M569.1 335.3h0M566.8 329.1h0M569.0 326.9h0M569.8 324.8h0M568.2 323.7h0M570.2 319.1h0M568.9 323.7h0M569.4 324.6h0M570.0 326.1h0M570.2 324.4h0M569.5 323.8h0M569.4 323.9h0M570.6 323.7h0M570.7 319.2h0M572.1 320.5h0M569.7 320.1h0M573.0 327.8h0M569.8 325.3h0M573.2 322.2h0M572.2 336.8h0M571.9 334.0h0M572.0 349.0h0M573.5 343.7h0M571.3 343.2h0M572.1 339.0h0M571.3 326.1h0M571.5 325.8h0M572.1 329.8h0M571.2 324.5h0M574.2 328.1h0M571.0 313.1h0M571.1 314.1h0M574.4 322.6h0M573.6 324.4h0M574.2 321.5h0M574.3 328.8h0M574.0 321.5h0M574.3 319.1h0M573.0 318.2h0M574.0 317.2h0M576.2 320.0h0M574.3 313.7h0M575.6 320.1h0M575.7 320.3h0M574.7 315.1h0M574.8 321.7h0M577.3 326.0h0M578.0 324.1h0M577.3 323.7h0M577.0 319.2h0M579.4 321.1h0M579.9 320.2h0M579.1 313.7h0M580.3 308.6h0M578.7 320.2h0M577.7 310.3h0M580.3 314.8h0M578.9 313.7h0M580.7 319.7h0M579.2 323.0h0M581.4 316.4h0M582.1 314.6h0M579.7 308.1h0M580.3 310.6h0M579.5 307.5h0M583.1 309.1h0M582.4 309.4h0M583.1 306.5h0M580.8 303.0h0M582.0 307.9h0M584.2 301.6h0M584.4 302.2h0M581.8 307.0h0M583.1 298.8h0M584.9 298.6h0M584.3 312.4h0M583.7 301.6h0M583.3 297.8h0M585.7 307.9h0M584.1 302.2h0M585.8 304.2h0M586.1 297.5h0M585.0 298.0h0M584.7 296.0h0M586.7 292.4h0M588.0 299.3h0M585.4 298.8h0M585.2 304.3h0M585.4 298.2h0M587.0 301.5h0M586.7 295.0h0M586.9 296.4h0M588.7 296.4h0M590.1 298.3h0M587.8 298.5h0M589.0 297.0h0M589.2 274.6h0M590.0 275.6h0M589.4 274.7h0M589.3 276.4h0M590.2 277.2h0M591.1 273.9h0M591.6 277.9h0M591.2 275.7h0M592.1 273.7h0M592.2 274.6h0M593.3 275.8h0M592.4 271.8h0M593.0 275.1h0M593.5 275.4h0M594.6 275.0h0M595.3 276.3h0M594.9 276.3h0M594.8 276.6h0M596.4 271.6h0M595.6 275.7h0M596.7 272.1h0M597.6 273.8h0M596.9 275.9h0M597.5 277.5h0M598.9 278.4h0M599.7 283.5h0M598.0 277.4h0M599.0 278.6h0M598.7 290.2h0M597.6 283.6h0M597.7 283.6h0M600.4 296.0h0M598.3 294.8h0M600.4 302.1h0M599.1 295.3h0M601.4 297.6h0M601.3 302.5h0M600.0 298.8h0M601.1 296.3h0M598.9 305.9h0M600.1 298.4h0M598.3 303.7h0M597.5 300.4h0M596.9 305.2h0M599.8 305.9h0M597.2 309.6h0M600.4 308.8h0M598.4 309.7h0M597.5 310.6h0M600.2 306.5h0M600.6 306.8h0M598.4 308.9h0M601.4 309.5h0M601.7 312.1h0M602.1 309.6h0M602.6 311.8h0M600.1 308.9h0M600.0 316.4h0M602.9 310.1h0M602.5 310.5h0M601.4 304.3h0M601.0 315.9h0M601.6 315.6h0M602.3 312.3h0M602.3 314.6h0M602.7 314.7h0M603.1 313.1h0M605.7 310.4h0M604.7 316.3h0M602.7 311.4h0M605.8 315.7h0M604.4 310.6h0M604.2 309.1h0M606.9 321.6h0M604.5 321.2h0M604.1 321.0h0M608.1 327.1h0M604.6 318.0h0M607.8 325.3h0M605.6 323.9h0M607.0 330.0h0M607.2 340.0h0M607.6 353.7h0M681.7 355.0h0M683.0 351.6h0M682.1 351.3h0M684.6 347.9h0M682.5 351.5h0M683.0 348.4h0M682.5 343.9h0M684.5 344.2h0M684.2 339.8h0M685.4 340.3h0M686.2 335.7h0M686.1 335.8h0M685.7 333.2h0M686.9 331.0h0M687.7 331.2h0M687.5 332.7h0M687.0 338.5h0M688.3 337.5h0M688.4 340.7h0M686.9 338.9h0M687.1 346.1h0M686.4 346.0h0" stroke="#ee1212" stroke-width="4.300" stroke-linecap="round" fill="none"/>
</svg>
<div class="t" style='left:168.33px;top:452.90px;font:10px "Liberation Sans",sans-serif;line-height:14px;color:#3c3c3c;'>0,00</div>
<div class="t" style='left:162.77px;top:432.26px;font:10px "Liberation Sans",sans-serif;line-height:14px;color:#3c3c3c;'>10,00</div>
<div class="t" style='left:162.77px;top:411.62px;font:10px "Liberation Sans",sans-serif;line-height:14px;color:#3c3c3c;'>20,00</div>
<div class="t" style='left:162.77px;top:390.98px;font:10px "Liberation Sans",sans-serif;line-height:14px;color:#3c3c3c;'>30,00</div>
<div class="t" style='left:162.77px;top:370.34px;font:10px "Liberation Sans",sans-serif;line-height:14px;color:#3c3c3c;'>40,00</div>
<div class="t" style='left:162.77px;top:349.70px;font:10px "Liberation Sans",sans-serif;line-height:14px;color:#3c3c3c;'>50,00</div>
<div class="t" style='left:162.77px;top:329.06px;font:10px "Liberation Sans",sans-serif;line-height:14px;color:#3c3c3c;'>60,00</div>
<div class="t" style='left:162.77px;top:308.42px;font:10px "Liberation Sans",sans-serif;line-height:14px;color:#3c3c3c;'>70,00</div>
<div class="t" style='left:162.77px;top:287.78px;font:10px "Liberation Sans",sans-serif;line-height:14px;color:#3c3c3c;'>80,00</div>
<div class="t" style='left:162.77px;top:267.14px;font:10px "Liberation Sans",sans-serif;line-height:14px;color:#3c3c3c;'>90,00</div>
<div class="t" style='left:157.21px;top:246.50px;font:10px "Liberation Sans",sans-serif;line-height:14px;color:#3c3c3c;'>100,00</div>
<div class="t" style='left:370.00px;top:220.50px;font:10px "Liberation Sans",sans-serif;line-height:14px;color:#3c3c3c;letter-spacing:-0.167px;'>SRV-OFFICE4 : Paging File-% Usage-_Total</div>
<div class="t" style='left:178.03px;top:466.20px;font:10px "Liberation Sans",sans-serif;line-height:14px;color:#3c3c3c;'>10:04:03</div>
<div class="t" style='left:172.47px;top:477.70px;font:10px "Liberation Sans",sans-serif;line-height:14px;color:#3c3c3c;'>13.06.2010</div>
<div class="t" style='left:182.06px;top:489.00px;font:10px "Liberation Sans",sans-serif;line-height:14px;color:#3c3c3c;'>+04:00</div>
<div class="t" style='left:357.33px;top:466.20px;font:10px "Liberation Sans",sans-serif;line-height:14px;color:#3c3c3c;'>21:45:46</div>
<div class="t" style='left:351.77px;top:477.70px;font:10px "Liberation Sans",sans-serif;line-height:14px;color:#3c3c3c;'>14.06.2010</div>
<div class="t" style='left:361.36px;top:489.00px;font:10px "Liberation Sans",sans-serif;line-height:14px;color:#3c3c3c;'>+04:00</div>
<div class="t" style='left:539.51px;top:466.20px;font:10px "Liberation Sans",sans-serif;line-height:14px;color:#3c3c3c;'>9:27:30</div>
<div class="t" style='left:531.17px;top:477.70px;font:10px "Liberation Sans",sans-serif;line-height:14px;color:#3c3c3c;'>16.06.2010</div>
<div class="t" style='left:540.76px;top:489.00px;font:10px "Liberation Sans",sans-serif;line-height:14px;color:#3c3c3c;'>+04:00</div>
<div class="t" style='left:716.53px;top:466.20px;font:10px "Liberation Sans",sans-serif;line-height:14px;color:#3c3c3c;'>21:09:13</div>
<div class="t" style='left:710.97px;top:477.70px;font:10px "Liberation Sans",sans-serif;line-height:14px;color:#3c3c3c;'>17.06.2010</div>
<div class="t" style='left:720.56px;top:489.00px;font:10px "Liberation Sans",sans-serif;line-height:14px;color:#3c3c3c;'>+04:00</div>
<div class="t" style='left:314.49px;top:501.30px;font:10px "Liberation Sans",sans-serif;line-height:14px;color:#3c3c3c;'>This graph is currently showing data over a 107 hour 5 minute period</div>
</body></html>
